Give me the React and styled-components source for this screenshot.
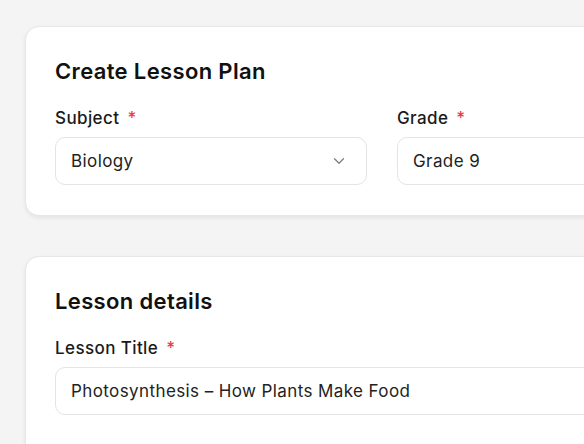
import styled, { createGlobalStyle } from 'styled-components';
import { ChevronDown } from 'lucide-react';

const GlobalStyle = createGlobalStyle`
  html, body {
    margin: 0;
    padding: 0;
    background: #f4f4f4;
    overflow: hidden;
  }
  body {
    font-family: Inter, 'Noto Sans', sans-serif;
    color: #111;
  }
`;

const Page = styled.main`
  display: flex;
  flex-direction: column;
  gap: 40px;
  padding: 26px 0 0 25px;
  width: 760px;
`;

const Card = styled.section`
  background: #fff;
  border: 1px solid #e7e7e7;
  border-radius: 14px;
  box-shadow: 0 2px 4px rgba(0, 0, 0, 0.07);
  padding: 29px 29px 30px;
  min-height: ${(p) => p.$minHeight || 'auto'};
`;

const Heading = styled.h2`
  margin: 0 0 21px;
  font-size: 22px;
  line-height: 30px;
  font-weight: 600;
  letter-spacing: 0.35px;
  color: #111;
`;

const Row = styled.div`
  display: grid;
  grid-template-columns: ${(p) => p.$cols || '1fr'};
  gap: 30px;
`;

const Field = styled.div`
  display: flex;
  flex-direction: column;
  gap: 8px;
`;

const Label = styled.label`
  font-size: 17px;
  line-height: 22px;
  font-weight: 500;
  letter-spacing: 0.4px;
  color: #1a1a1a;
  .req {
    color: #ef3b45;
    margin-left: 8px;
  }
`;

const Control = styled.div`
  display: flex;
  align-items: center;
  justify-content: space-between;
  height: 48px;
  box-sizing: border-box;
  padding: 0 18px 0 15px;
  border: 1px solid #e4e4e4;
  border-radius: 10px;
  font-size: 17px;
  letter-spacing: 0.4px;
  color: #222;
  background: #fff;
  svg {
    color: #7c7c7c;
  }
`;

function FormField({ label, value, select }) {
  return (
    <Field>
      <Label>
        {label}
        <span className="req">*</span>
      </Label>
      <Control>
        <span>{value}</span>
        {select && <ChevronDown size={18} strokeWidth={1.6} />}
      </Control>
    </Field>
  );
}

export default function App() {
  return (
    <>
      <GlobalStyle />
      <Page>
        <Card>
          <Heading>Create Lesson Plan</Heading>
          <Row $cols="312px 312px">
            <FormField label="Subject" value="Biology" select />
            <FormField label="Grade" value="Grade 9" select />
          </Row>
        </Card>
        <Card $minHeight="260px">
          <Heading>Lesson details</Heading>
          <Row>
            <FormField
              label="Lesson Title"
              value="Photosynthesis – How Plants Make Food"
            />
          </Row>
        </Card>
      </Page>
    </>
  );
}
